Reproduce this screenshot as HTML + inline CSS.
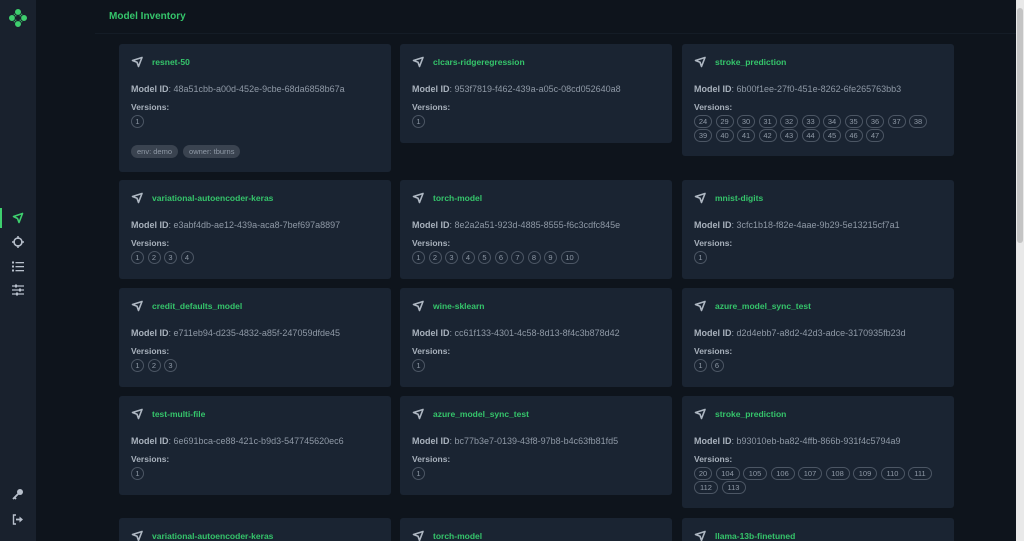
<!DOCTYPE html>
<html style="height:541px;overflow:hidden"><head><meta charset="utf-8"><style>
*{box-sizing:border-box;margin:0;padding:0}
body{width:1024px;height:541px;overflow:hidden;background:#0e141c;font-family:"Liberation Sans",sans-serif;position:relative}
.side{position:absolute;left:0;top:0;width:36px;height:541px;background:#19212d}
.sb{position:absolute;left:1016px;top:0;width:8px;height:541px;background:#e9e9e9}
.sb div{position:absolute;left:1px;top:8px;width:6px;height:235px;background:#c4c4c4;border-radius:3px}
.hdr{position:absolute;left:95px;top:0;width:921px;height:34px;border-bottom:1px solid #141c26}
.hdr span{position:absolute;left:14px;top:11px;color:#35c56b;font-weight:bold;font-size:10px}
.card{position:absolute;width:272px;background:#1a2432;border-radius:3px;padding:12px 12px 14px 12px;overflow:hidden}
.t{display:flex;align-items:center;height:12px}
.t svg{margin-right:8px}
.t b{color:#35c56b;font-size:8.5px}
.id{color:#8f99a6;font-size:9px;margin-top:16px}
.id strong{color:#a8b1bc}
.v{color:#a8b1bc;font-size:8.5px;font-weight:bold;margin-top:8px}
.ps{display:flex;flex-wrap:wrap;width:250px;margin-top:3px}
.p{height:13px;min-width:13px;padding:0 3px;border:1px solid #4c5664;border-radius:7px;color:#8f99a6;font-size:7.5px;line-height:11px;text-align:center;margin:0 3.5px 0.5px 0}
.p.w{min-width:18px}
.p.x{min-width:24px}
.tags{display:flex;margin-top:16px}
.tag{background:#3a4350;color:#8f99a6;font-size:7.5px;border-radius:7px;padding:0 6px;height:13px;line-height:13px;margin-right:5px}
</style></head><body>
<div class="side">
<svg style="position:absolute;left:7px;top:7px" width="22" height="22" viewBox="0 0 22 22"><g fill="#3ecf6e" stroke="#19212d" stroke-width="1"><path d="M11 2 L20 11 L11 20 L2 11Z" fill="#3ecf6e"/><circle cx="11" cy="5" r="3.5"/><circle cx="5" cy="11" r="3.5"/><circle cx="17" cy="11" r="3.5"/><circle cx="11" cy="17" r="3.5"/></g><rect x="8.5" y="8.5" width="5" height="5" fill="#19212d" transform="rotate(45 11 11)"/></svg>
<div style="position:absolute;left:0;top:208px;width:2px;height:20px;background:#3ecf6e"></div>
<svg style="position:absolute;left:12px;top:212px" width="12" height="12" viewBox="0 0 12 12"><path d="M1.5 4.5 L10.5 1.5 L7 10.5 L5.5 6.5Z" fill="none" stroke="#3ecf6e" stroke-width="1.6" stroke-linejoin="round"/></svg>
<svg style="position:absolute;left:12px;top:236px" width="12" height="12" viewBox="0 0 12 12"><circle cx="6" cy="6" r="4" fill="none" stroke="#b8c0cc" stroke-width="1.5"/><path d="M6 0v3M6 9v3M0 6h3M9 6h3" stroke="#b8c0cc" stroke-width="1.5"/></svg>
<svg style="position:absolute;left:12px;top:261px" width="12" height="11" viewBox="0 0 12 11"><g fill="#b8c0cc"><rect x="0" y="0.5" width="2" height="2"/><rect x="0" y="4.5" width="2" height="2"/><rect x="0" y="8.5" width="2" height="2"/><rect x="3.5" y="1" width="8.5" height="1.3"/><rect x="3.5" y="5" width="8.5" height="1.3"/><rect x="3.5" y="9" width="8.5" height="1.3"/></g></svg>
<svg style="position:absolute;left:12px;top:284px" width="12" height="12" viewBox="0 0 12 12"><g stroke="#b8c0cc" stroke-width="1.3"><path d="M0 2h12M0 6h12M0 10h12"/><path d="M4 0.5v3M8 4.5v3M5 8.5v3" stroke-width="2"/></g></svg>
<svg style="position:absolute;left:12px;top:488px" width="12" height="12" viewBox="0 0 12 12"><circle cx="8" cy="4" r="3" fill="#b8c0cc"/><path d="M6 6 L1 11 M2.5 9.5 L4 11" stroke="#b8c0cc" stroke-width="1.8"/></svg>
<svg style="position:absolute;left:12px;top:514px" width="12" height="11" viewBox="0 0 12 11"><path d="M4 1H1.5v9H4" fill="none" stroke="#b8c0cc" stroke-width="1.4"/><path d="M4 5.5h4.5" stroke="#b8c0cc" stroke-width="1.8"/><path d="M7.5 2.5 L11 5.5 L7.5 8.5Z" fill="#b8c0cc"/></svg>
</div>
<div class="hdr"><span>Model Inventory</span></div>
<div class="sb"><div></div></div>
<div id="c"></div>
<script>
var ic='<svg width="13" height="12" viewBox="0 0 13 12"><path d="M1.5 4.5 L11 1.5 L7.5 10.5 L6 6.2Z" fill="none" stroke="#aeb7c2" stroke-width="1.6" stroke-linejoin="round"/></svg>';
var d=[
[119,44,"resnet-50","48a51cbb-a00d-452e-9cbe-68da6858b67a",["1"],1],
[400,44,"clcars-ridgeregression","953f7819-f462-439a-a05c-08cd052640a8",["1"]],
[682,44,"stroke_prediction","6b00f1ee-27f0-451e-8262-6fe265763bb3","24 29 30 31 32 33 34 35 36 37 38 39 40 41 42 43 44 45 46 47".split(" ")],
[119,180,"variational-autoencoder-keras","e3abf4db-ae12-439a-aca8-7bef697a8897",["1","2","3","4"]],
[400,180,"torch-model","8e2a2a51-923d-4885-8555-f6c3cdfc845e","1 2 3 4 5 6 7 8 9 10".split(" ")],
[682,180,"mnist-digits","3cfc1b18-f82e-4aae-9b29-5e13215cf7a1",["1"]],
[119,288,"credit_defaults_model","e711eb94-d235-4832-a85f-247059dfde45",["1","2","3"]],
[400,288,"wine-sklearn","cc61f133-4301-4c58-8d13-8f4c3b878d42",["1"]],
[682,288,"azure_model_sync_test","d2d4ebb7-a8d2-42d3-adce-3170935fb23d",["1","6"]],
[119,396,"test-multi-file","6e691bca-ce88-421c-b9d3-547745620ec6",["1"]],
[400,396,"azure_model_sync_test","bc77b3e7-0139-43f8-97b8-b4c63fb81fd5",["1"]],
[682,396,"stroke_prediction","b93010eb-ba82-4ffb-866b-931f4c5794a9","20 104 105 106 107 108 109 110 111 112 113".split(" ")],
[119,518,"variational-autoencoder-keras","",[]],
[400,518,"torch-model","",[]],
[682,518,"llama-13b-finetuned","",[]]
];
var h='';
d.forEach(function(c){
h+='<div class="card" style="left:'+c[0]+'px;top:'+c[1]+'px;'+(c[3]?'':'height:30px')+'"><div class="t">'+ic+'<b>'+c[2]+'</b></div>';
if(c[3]){h+='<div class="id"><strong>Model ID</strong>: '+c[3]+'</div><div class="v">Versions:</div><div class="ps">'+c[4].map(function(x){return '<span class="p'+(x.length>2?' x':x.length>1?' w':'')+'">'+x+'</span>'}).join('')+'</div>';
if(c[5])h+='<div class="tags"><span class="tag">env: demo</span><span class="tag">owner: tburns</span></div>';}
h+='</div>';});
document.getElementById('c').innerHTML=h;
</script>
</body></html>
